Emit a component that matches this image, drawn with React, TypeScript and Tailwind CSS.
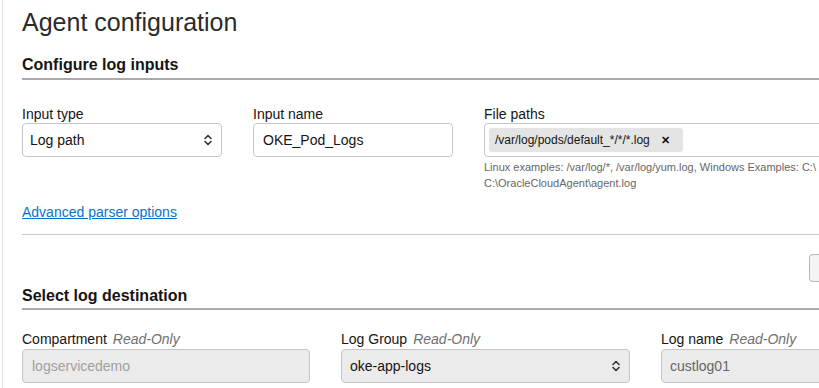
/* small stacked up/down caret used by the native-looking selects */
function Caret() {
  return (
    <svg width="10" height="14" viewBox="0 0 10 14" className="shrink-0 text-[#333]">
      <path d="M2 5.5 5 2.5 8 5.5" fill="none" stroke="currentColor" strokeWidth="1.6" strokeLinecap="round" strokeLinejoin="round" />
      <path d="M2 8.5 5 11.5 8 8.5" fill="none" stroke="currentColor" strokeWidth="1.6" strokeLinecap="round" strokeLinejoin="round" />
    </svg>
  )
}

function Label({ text, ro }: { text: string; ro?: boolean }) {
  return (
    <div className="flex h-[18px] items-center gap-[6px] text-[14px] text-[#161513]">
      <span>{text}</span>
      {ro && <span className="italic text-[#6f6f6f]">Read-Only</span>}
    </div>
  )
}

function Section({ title, pb }: { title: string; pb: string }) {
  return (
    <div className={'border-b-2 border-[#aaa] ' + pb}>
      <h2 className="text-[16px] font-bold leading-[20px] text-[#161513]">{title}</h2>
    </div>
  )
}

export default function App() {
  return (
    <div className="h-[388px] w-[819px] overflow-hidden bg-white" style={{ fontFamily: '"Liberation Sans", Arial, sans-serif' }}>
      <div className="ml-[2px] h-full border-l border-[#e2e2e2] pl-[19px]">
        <h1 className="pt-[7px] text-[25px] font-normal leading-[30px] text-[#2b2b2b]">Agent configuration</h1>

        <div className="mt-[18px]">
          <Section title="Configure log inputs" pb="pb-[3px]" />
        </div>

        <div className="mt-[25px] flex gap-[31px]">
          <div className="w-[200px] shrink-0">
            <Label text="Input type" />
            <div className="flex h-[34px] items-center justify-between rounded-[4px] border border-[#c6c6c6] bg-white pl-[7px] pr-[8px] text-[14px] text-[#161513]">
              <span>Log path</span>
              <Caret />
            </div>
          </div>
          <div className="w-[200px] shrink-0">
            <Label text="Input name" />
            <div className="flex h-[34px] items-center rounded-[4px] border border-[#c6c6c6] bg-white pl-[9px] text-[14px] text-[#161513]">
              OKE_Pod_Logs
            </div>
          </div>
          <div className="w-[400px] shrink-0">
            <Label text="File paths" />
            <div className="flex h-[34px] items-center rounded-l-[4px] border border-[#c6c6c6] bg-white pl-[4px]">
              <span className="flex h-[24px] items-center gap-[11px] rounded-[3px] bg-[#e4e4e4] pl-[6px] pr-[13px] text-[12px] text-[#161513]">
                /var/log/pods/default_*/*/*.log
                <span className="text-[11px] font-bold leading-none">✕</span>
              </span>
            </div>
            <div className="mt-[2px] whitespace-nowrap text-[11px] leading-[16px] text-[#666]">
              Linux examples: /var/log/*, /var/log/yum.log, Windows Examples: C:\
            </div>
            <div className="whitespace-nowrap text-[11px] leading-[16px] text-[#666]">C:\OracleCloudAgent\agent.log</div>
          </div>
        </div>

        <div className="mt-[12px] text-[14px] leading-[18px]">
          <a href="#" className="text-[#0572ce] underline">Advanced parser options</a>
        </div>

        <div className="mt-[13px] border-b border-[#c8c8c8]" />

        <div className="mt-[19px] flex justify-end">
          <div className="-mr-[2px] h-[28px] w-[12px] rounded-l-[4px] border border-r-0 border-[#b8b8b8] bg-[#f4f4f4]" />
        </div>

        <div className="mt-[4px]">
          <Section title="Select log destination" pb="pb-[2px]" />
        </div>

        <div className="mt-[20px] flex gap-[31px]">
          <div className="w-[288px] shrink-0">
            <Label text="Compartment" ro />
            <div className="mt-[1px] flex h-[34px] items-center rounded-[4px] border border-[#c6c6c6] bg-[#ebebeb] pl-[9px] text-[14px] text-[#a0a0a0]">
              logservicedemo
            </div>
          </div>
          <div className="w-[289px] shrink-0">
            <Label text="Log Group" ro />
            <div className="mt-[1px] flex h-[34px] items-center justify-between rounded-[4px] border border-[#c6c6c6] bg-[#ebebeb] pl-[8px] pr-[8px] text-[14px] text-[#161513]">
              <span>oke-app-logs</span>
              <Caret />
            </div>
          </div>
          <div className="w-[200px] shrink-0">
            <Label text="Log name" ro />
            <div className="mt-[1px] flex h-[34px] items-center rounded-l-[4px] border border-[#c6c6c6] bg-[#ebebeb] pl-[8px] text-[14px] text-[#666]">
              custlog01
            </div>
          </div>
        </div>
      </div>
    </div>
  )
}
